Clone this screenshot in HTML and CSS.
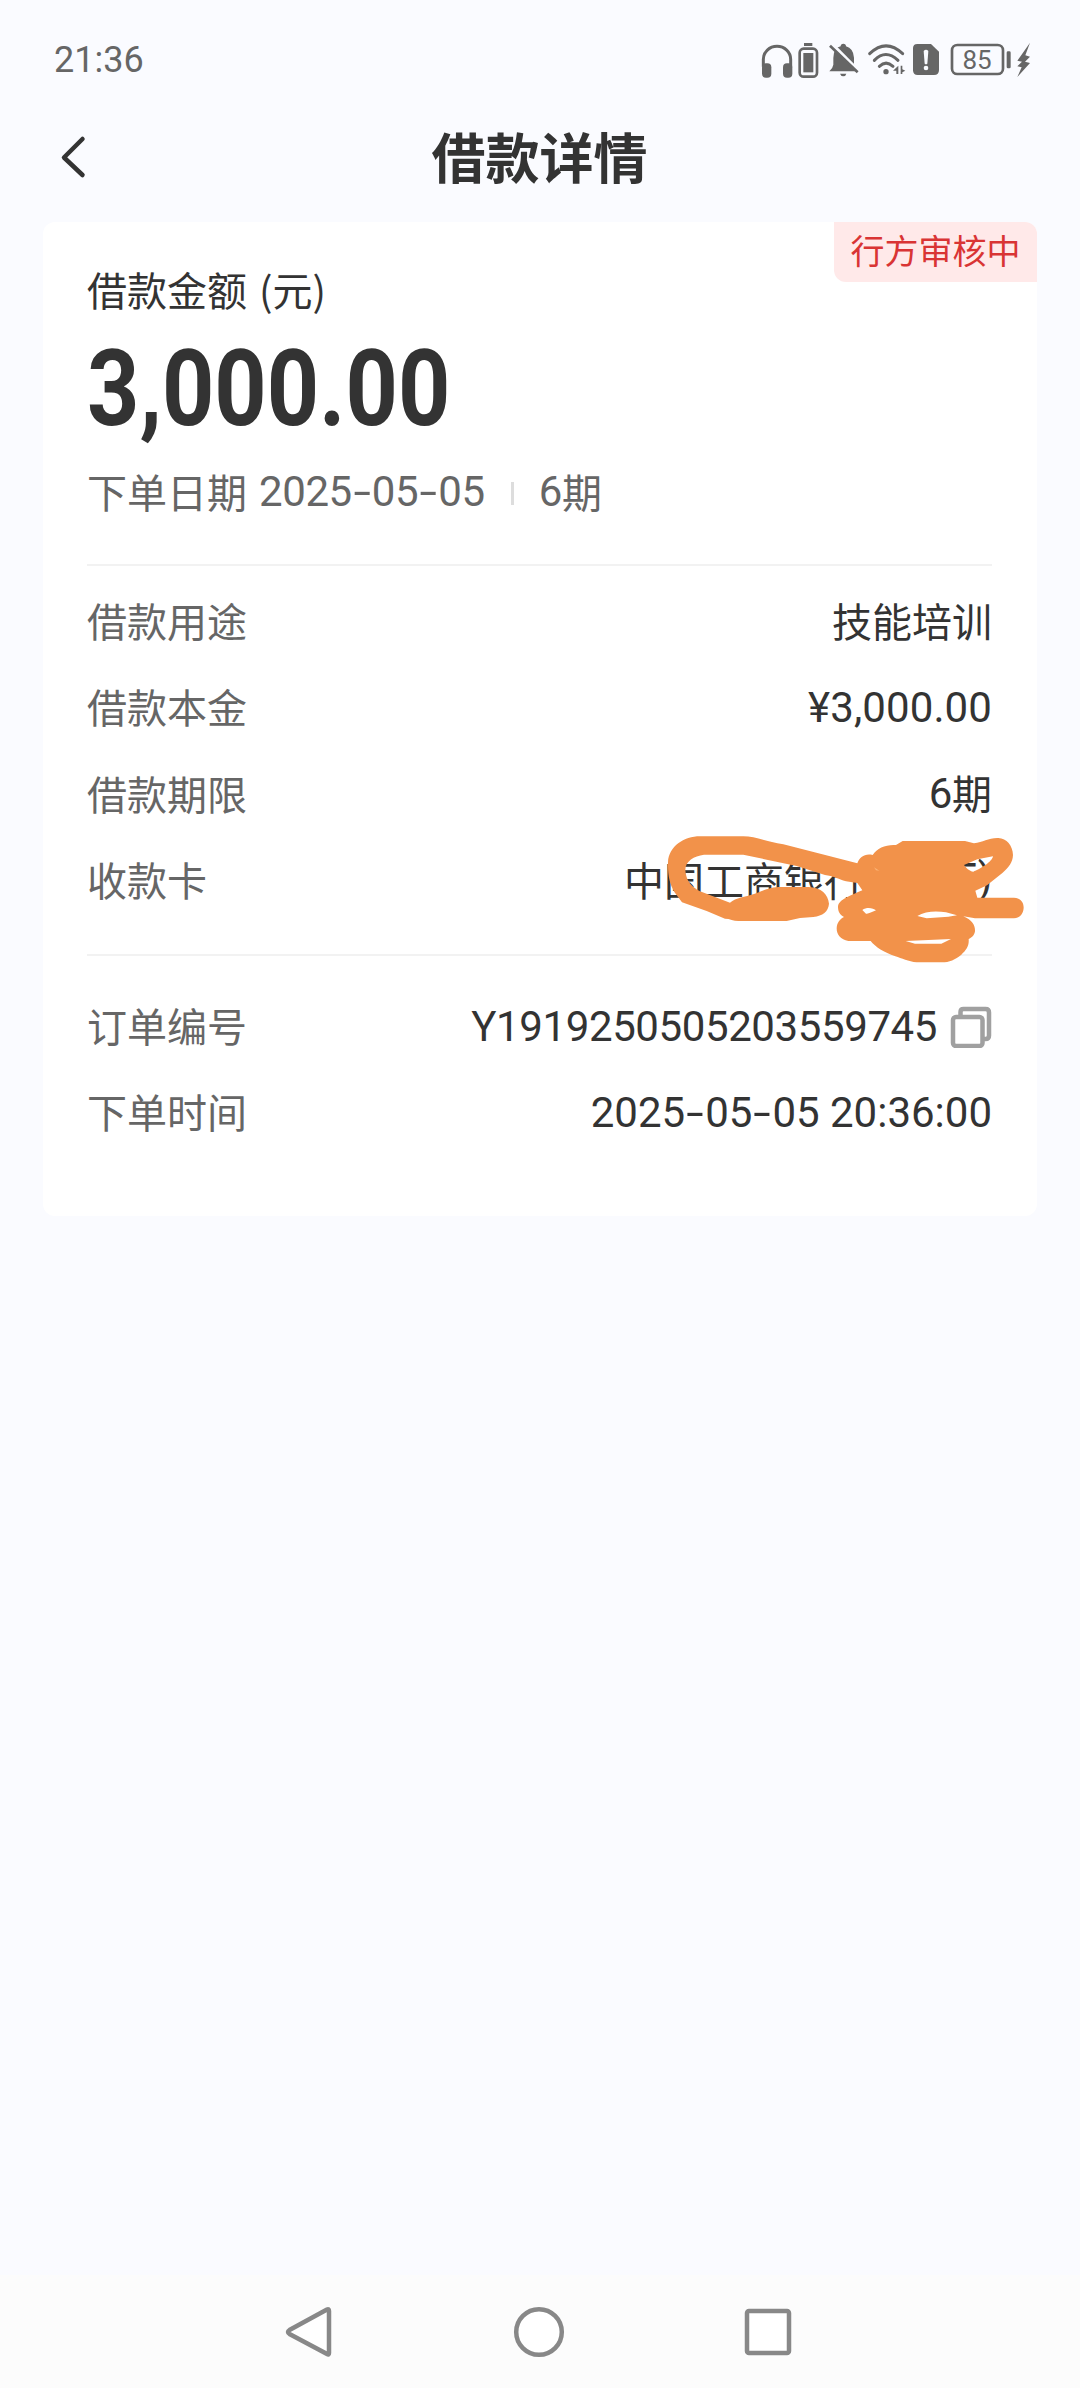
FILE: index.html
```html
<!DOCTYPE html>
<html lang="zh-CN">
<head>
<meta charset="utf-8">
<title>借款详情</title>
<link rel="stylesheet" href="styles.css">
</head>
<body>
<div class="screen">
  <header class="status">
    <span class="clock">21:36</span>
    <svg class="status-icons" viewBox="0 0 960 180" fill="#666" stroke="none">
      <g>
        <path d="M70 110V88a41 39 0 0 1 82 0v22" fill="none" stroke="#666" stroke-width="9"/>
        <rect x="66" y="100" width="28" height="43" rx="12"/><rect x="129" y="100" width="28" height="43" rx="12"/>
      </g>
      <g>
        <rect x="192" y="39" width="25" height="9"/>
        <rect x="179" y="56" width="52" height="84" rx="12" fill="none" stroke="#666" stroke-width="8"/>
        <rect x="190" y="69" width="30" height="58"/>
      </g>
      <g>
        <path d="M268 124q10-8 12-20V84q0-30 22-35a8 8 0 0 1 16 0q22 6 24 34v20q3 13 11 21zM300 131h19q-2 8-9 8t-10-8z"/>
        <path d="M275 41l81 82" stroke="#fafbff" stroke-width="10"/>
        <path d="M270 47l83 80" stroke="#666" stroke-width="8"/>
      </g>
      <g>
        <path d="M389 71q49-47 99 0M403 91q34-35 71 0M418 109q20-19 41 0" fill="none" stroke="#666" stroke-width="9" stroke-linecap="round"/>
        <circle cx="438" cy="125" r="8"/>
        <path d="M475 107v25h-6v-10h-10zM482 107v25h5v-5l9-5-9-4v-11z"/>
      </g>
      <g>
        <path d="M532 42h41l24 23v55q0 15-15 15h-49q-14 0-14-14V55q0-13 13-13z"/>
        <path d="M551 63q7-7 14 0l-3 38q-4 4-8 0z" fill="#fafbff"/><circle cx="558" cy="114" r="7" fill="#fafbff"/>
      </g>
      <g>
        <rect x="636" y="45" width="153" height="87" rx="16" fill="none" stroke="#666" stroke-width="8"/>
        <text class="battery-level" x="711" y="116" text-anchor="middle">85</text>
        <rect x="800" y="64" width="12" height="51" rx="4"/>
        <path d="M870 38l-38 54 14 3-14 14 13 3-13 29 38-42-15-4 15-15-14-4z"/>
      </g>
    </svg>
  </header>

  <div class="titlebar">
    <svg class="back" viewBox="0 0 28 44"><path d="M23.500 4L5 22.500 23.500 40" fill="none" stroke="#333" stroke-width="4.500" stroke-linecap="round" stroke-linejoin="round"/></svg>
    <h1 class="title">借款详情</h1>
  </div>

  <main class="card">
    <span class="badge">行方审核中</span>
    <section class="summary">
      <p class="caption">借款金额<span class="unit"> (元)</span></p>
      <p class="amount"><span class="amount-value">3,000.00</span></p>
      <p class="meta"><span class="cjk">下单日期</span><span class="num date">2025<i class="dash">-</i>05<i class="dash">-</i>05</span><i class="bar"></i><span class="num">6</span><span class="cjk">期</span></p>
    </section>
    <section class="details">
      <div class="row"><span class="label">借款用途</span><span class="value">技能培训</span></div>
      <div class="row"><span class="label">借款本金</span><span class="value num price">¥3,000.00</span></div>
      <div class="row"><span class="label">借款期限</span><span class="value term"><span class="num">6</span><span>期</span></span></div>
      <div class="row">
        <span class="label">收款卡</span>
        <span class="value card-number"><span>中国工商银行</span><span class="num tail">5)</span></span>
        <svg class="scribble" viewBox="0 0 1320 480" fill="#f2924a">
          <path fill-rule="evenodd" d="M204 130C206 82 252 52 300 52H430C465 52 500 68 550 76L772 133C778 115 795 102 818 108C832 86 858 76 888 78L908 66H1095L1122 73C1150 70 1165 56 1195 57C1220 58 1238 80 1239 108C1238 130 1226 146 1208 161L1161 199L1126 215L1132 236H1242C1262 238 1271 250 1271 266C1270 284 1260 296 1242 298H1125L1090 292C1118 304 1126 320 1125 337C1123 350 1115 356 1106 360C1108 382 1098 394 1084 407C1066 422 1048 430 1025 430H950C925 428 905 418 886 412C852 400 826 384 812 366H745C722 362 710 348 710 328C711 310 720 300 732 294C718 286 714 276 714 263C717 244 736 236 787 214L772 192L738 187C715 180 699 171 675 168L590 141L430 107H312C282 111 256 126 256 153C258 184 272 202 300 217L390 251C408 236 435 234 462 225C495 213 510 204 545 204H625C665 206 684 226 687 254C685 278 668 290 640 294L600 297L560 306H415C400 306 390 299 375 299L320 276L246 250L223 219C209 195 203 170 204 130ZM1092 138L1132 121L1179 112C1177 128 1140 151 1120 158C1108 157 1098 146 1092 138ZM787 273C800 263 820 267 828 274C814 279 805 286 798 284ZM952 291C975 276 1010 275 1038 280L1071 289L1045 293L980 298ZM917 366L1053 360L1024 374H945Z"/>
          <path d="M822 145l16 10-10-1z" fill="#fbb477"/>
        </svg>
      </div>
    </section>
    <section class="details order">
      <div class="row"><span class="label">订单编号</span><span class="value with-copy"><span class="num order-id">Y1919250505203559745</span>
        <svg class="copy" viewBox="0 0 42 42" fill="none" stroke="#a0a0a0" stroke-width="4.500"><path d="M10.500 11V6q0-3 3-3h22q3.500 0 3.500 3.500v23q0 3.500-3.500 3.500H33"/><rect x="3" y="11" width="29.500" height="29" rx="3"/></svg></span></div>
      <div class="row"><span class="label">下单时间</span><span class="value num time">2025<i class="dash">-</i>05<i class="dash">-</i>05 20:36:00</span></div>
    </section>
  </main>

  <nav class="navbar">
    <svg viewBox="0 0 54 54"><path d="M45 4.500Q47 3.500 47 6V48Q47 50.500 45 49L7.500 29Q4.500 27 7.500 25Z"/></svg>
    <svg viewBox="0 0 54 54"><circle cx="27" cy="27" r="22.800"/></svg>
    <svg viewBox="0 0 54 54"><rect x="5" y="6" width="42" height="42" rx="2"/></svg>
  </nav>
</div>
</body>
</html>
```

FILE: styles.css
```css
* { box-sizing: border-box; }
body { margin: 0; background: #fafbff; }
h1, p { margin: 0; font-weight: inherit; }
i { font-style: normal; }
svg { display: block; flex: none; }

.screen {
  width: 1080px;
  height: 2388px;
  display: flex;
  flex-direction: column;
  color: #333;
  font: 40px/60px "Noto Sans CJK SC", sans-serif;
}

.status {
  height: 120px;
  padding: 0 20px 0 54px;
  display: flex;
  align-items: center;
  justify-content: space-between;
}
.clock {
  font: 36px/40px Roboto, sans-serif;
  color: #666;
}
.status-icons { width: 320px; height: 60px; }
.battery-level { font: 78px Roboto, sans-serif; }

.titlebar {
  height: 102px;
  padding: 0 60px 28px 59px;
  display: grid;
  grid-template-columns: 28px 1fr 28px;
  align-items: center;
}
.back { width: 28px; height: 44px; }
.title {
  padding-bottom: 3px;
  text-align: center;
  font-size: 54px;
  line-height: 71px;
  font-weight: 700;
}

.card {
  position: relative;
  height: 994px;
  margin: 0 43px;
  padding: 0 45px 0 44px;
  background: #fff;
  border-radius: 12px;
}
.badge {
  position: absolute;
  top: 0;
  right: 0;
  width: 203px;
  height: 60px;
  border-radius: 0 12px 0 12px;
  background: #ffe9e9;
  color: #d93434;
  font-size: 34px;
  line-height: 56px;
  text-align: center;
}

.summary {
  height: 344px;
  padding-top: 37px;
  border-bottom: 2px solid #f2f2f2;
}
.unit { word-spacing: 3px; }
.amount {
  height: 136px;
  padding-top: 3px;
  color: #333;
  font: 700 105px/136px Roboto, sans-serif;
}
.amount-value {
  display: inline-block;
  transform: scaleX(0.87);
  transform-origin: left;
}
.meta {
  margin-top: 4px;
  display: flex;
  align-items: center;
  color: #666;
}
.num {
  font-family: Roboto, "Noto Sans CJK SC", sans-serif;
  font-size: 42px;
  letter-spacing: -0.4px;
}
.meta .num { padding-top: 3px; }
.date { margin-left: 12px; }
.dash {
  display: inline-block;
  width: 20px;
  text-align: center;
  transform: scaleX(1.5);
}
.bar {
  width: 3px;
  height: 23px;
  margin: 6px 25px 0 26px;
  background: #ddd;
}

.details {
  height: 390px;
  padding-top: 11px;
  border-bottom: 2px solid #f2f2f2;
}
.row {
  position: relative;
  height: 86.3px;
  display: flex;
  align-items: center;
  justify-content: space-between;
}
.label { color: #666; }
.value { white-space: nowrap; }
.value.num, .order-id { padding-top: 4px; }
.price { letter-spacing: 0.1px; }
.term { display: flex; }
.term .num { padding-top: 2px; }
.time { letter-spacing: 0; }
.card-number {
  width: 368px;
  display: flex;
  justify-content: space-between;
}
.scribble {
  position: absolute;
  left: 513px;
  top: -17px;
  width: 440px;
  height: 160px;
}
.order { height: 220px; padding-top: 26px; border: 0; }
.with-copy { display: flex; align-items: center; gap: 13px; }
.copy { width: 42px; height: 42px; margin-top: 4px; }

.navbar {
  height: 113px;
  margin-top: auto;
  padding: 0 284px 0 282px;
  display: flex;
  align-items: center;
  justify-content: space-between;
  background: #fcfcfc;
}
.navbar svg {
  width: 54px;
  height: 54px;
  fill: #fff;
  stroke: #888;
  stroke-width: 4.5;
}
```
